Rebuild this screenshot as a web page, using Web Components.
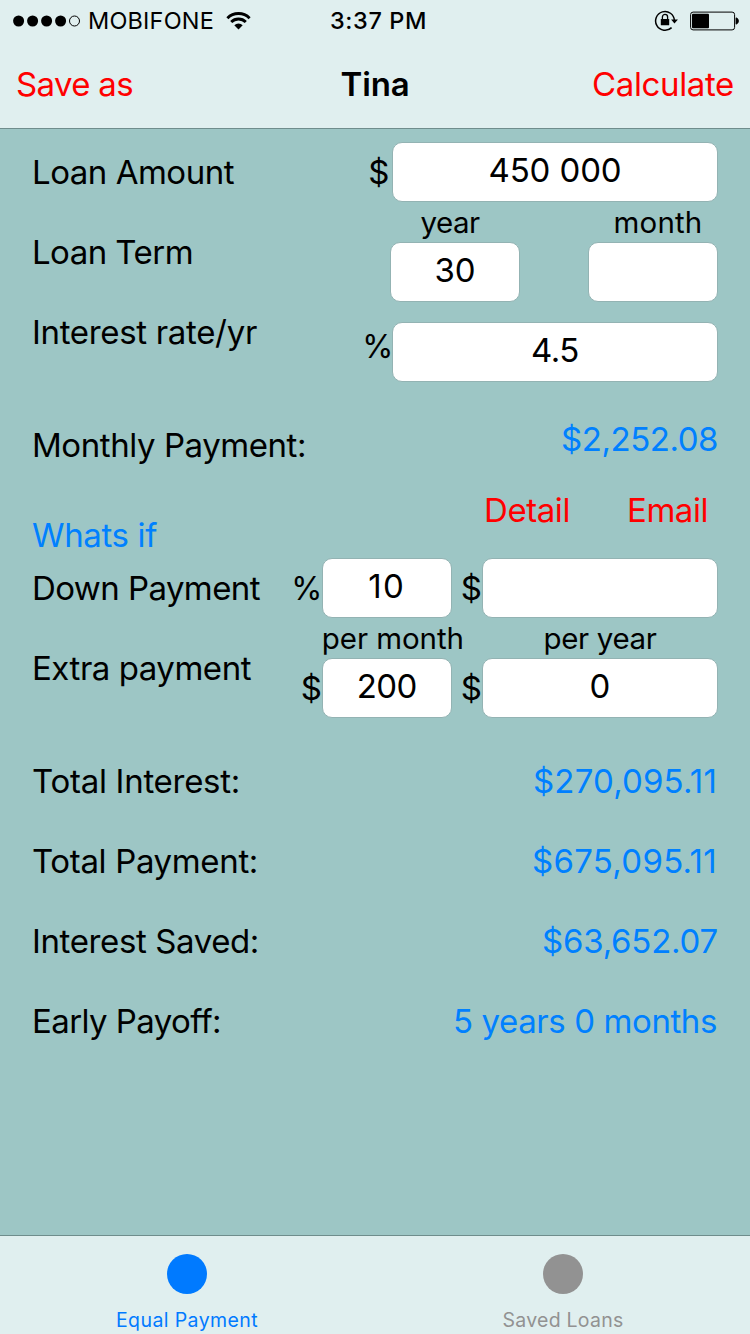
<!DOCTYPE html>
<html lang="en">
<head>
<meta charset="utf-8">
<title>Tina</title>
<style>
  html, body {
    margin: 0;
    height: 100%;
  }
  body {
    font-family: Inter, Roboto, "Liberation Sans", sans-serif;
    font-size: 33px;
    color: #000;
    background: #9dc6c5;
    overflow: hidden;
  }
</style>
</head>
<body>
<loan-app></loan-app>

<script>
// One line of text, tracked so that it takes up "fit" pixels
class UiText extends HTMLElement {
  constructor() {
    super();
    this.attachShadow({ mode: 'open' });
    this.shadowRoot.innerHTML = `
      <style>
        :host { display: block; flex: none; line-height: 40px; white-space: nowrap; }
        :host([tone="blue"]) { color: #0080ff; }
        :host([tone="red"]) { color: #ff0000; }
        :host([size="small"]) { font-size: 29.5px; }
        :host([size="status"]) { font-size: 23.5px; }
        :host([size="tab"]) { font-size: 19.5px; }
        span { display: inline-block; }
      </style>
      <span><slot></slot></span>
    `;
  }

  connectedCallback() {
    const fit = parseFloat(this.getAttribute('fit'));
    if (!fit) return;
    const span = this.shadowRoot.querySelector('span');
    const natural = span.getBoundingClientRect().width;
    span.style.letterSpacing = (fit - natural) / this.textContent.length + 'px';
  }
}

// White rounded input with centered text
class LoanField extends HTMLElement {
  constructor() {
    super();
    this.attachShadow({ mode: 'open' });
    this.shadowRoot.innerHTML = `
      <style>
        :host {
          display: flex;
          flex: none;
          box-sizing: border-box;
          justify-content: center;
          height: 60px;
          padding-top: 7px;
          border: 1px solid #93b3b3;
          border-radius: 10px;
          background: #fff;
        }
      </style>
      <slot></slot>
    `;
  }
}

class LoanRow extends HTMLElement {
  constructor() {
    super();
    this.attachShadow({ mode: 'open' });
    this.shadowRoot.innerHTML = `
      <style>
        :host { display: flex; box-sizing: border-box; flex: none; align-items: flex-start; }
        .controls { display: flex; align-items: flex-start; margin-left: auto; }
      </style>
      <slot name="label"></slot>
      <div class="controls"><slot></slot></div>
    `;
  }
}

class StatusBar extends HTMLElement {
  constructor() {
    super();
    this.attachShadow({ mode: 'open' });
    this.shadowRoot.innerHTML = `
      <style>
        :host { display: grid; grid-template-columns: 1fr auto 1fr; height: 40px; align-items: center; }
        svg { display: block; flex: none; }
        .left, .right { display: flex; align-items: center; height: 40px; }
        .left { padding-left: 13px; }
        .right { justify-content: flex-end; padding-right: 10px; gap: 12px; }
        .time { font-weight: 500; padding: 1px 0 0 7px; }
        .carrier { margin: 1px 12px 0 7px; }
      </style>
      <div class="left">
        <svg width="68" height="12" viewBox="0 0 68 12">
          <circle cx="5.6" cy="6" r="5.5"/>
          <circle cx="19.6" cy="6" r="5.5"/>
          <circle cx="33.6" cy="6" r="5.5"/>
          <circle cx="47.6" cy="6" r="5.5"/>
          <circle cx="61.5" cy="6" r="5" fill="none" stroke="#000"/>
        </svg>
        <ui-text class="carrier" size="status" fit="126">MOBIFONE</ui-text>
        <svg width="25" height="18" viewBox="0 0 25 18">
          <g fill="none" stroke="#000" stroke-width="2.9">
            <path d="M1.4 6.2a15.6 15.6 0 0 1 22.2 0"/>
            <path d="M5.2 10.1a10.3 10.3 0 0 1 14.6 0"/>
          </g>
          <path d="M8.3 13.3a6 6 0 0 1 8.4 0L12.5 17.6z"/>
        </svg>
      </div>
      <ui-text class="time" size="status" fit="97">3:37 PM</ui-text>
      <div class="right">
        <svg width="24" height="22" viewBox="0 0 24 22">
          <path d="M17.6 17.6A9.4 9.4 0 1 1 20.4 10.5" fill="none" stroke="#000" stroke-width="1.5"/>
          <path d="M17.1 9.6h6.8l-3.4 4z"/>
          <rect x="6.8" y="8.9" width="8.4" height="6.4" rx=".6"/>
          <path d="M8.4 9.4V7a2.6 2.6 0 0 1 5.2 0v2.4" fill="none" stroke="#000" stroke-width="1.3"/>
        </svg>
        <svg width="50" height="20" viewBox="0 0 50 20">
          <rect x=".6" y="1.1" width="44" height="17.8" rx="2.5" fill="none" stroke="#000"/>
          <rect x="2" y="2.7" width="17" height="14.6" rx="1"/>
          <path d="M46 6.8a3.3 3.3 0 0 1 0 6.4z" stroke="#000" stroke-width=".8"/>
        </svg>
      </div>
    `;
  }
}

class NavBar extends HTMLElement {
  constructor() {
    super();
    this.attachShadow({ mode: 'open' });
    this.shadowRoot.innerHTML = `
      <style>
        :host {
          display: grid;
          grid-template-columns: 1fr auto 1fr;
          align-items: center;
          height: 88px;
          padding: 0 16px;
          color: #ff0000;
        }
        .title { color: #000; font-weight: 600; }
        .right { display: flex; justify-content: flex-end; }
      </style>
      <slot name="left"></slot>
      <div class="title"><slot></slot></div>
      <div class="right"><slot name="right"></slot></div>
    `;
  }
}

class TabItem extends HTMLElement {
  constructor() {
    super();
    this.attachShadow({ mode: 'open' });
    this.shadowRoot.innerHTML = `
      <style>
        :host { display: flex; flex: 1; flex-direction: column; align-items: center; padding-top: 18px; color: #929292; }
        :host([selected]) { color: #007aff; }
        .dot { flex: none; width: 40px; height: 40px; border-radius: 50%; background: currentColor; margin-bottom: 6px; }
      </style>
      <div class="dot"></div>
      <slot></slot>
    `;
  }
}

class LoanApp extends HTMLElement {
  constructor() {
    super();
    this.attachShadow({ mode: 'open' });
    this.shadowRoot.innerHTML = `
      <style>
        :host { display: flex; flex-direction: column; width: 750px; height: 1334px; overflow: hidden; }
        header { background: #e0efef; border-bottom: 1px solid #6f8d8c; }
        main { flex: 1; display: flex; flex-direction: column; box-sizing: border-box; padding: 13px 32px 0; }
        footer { display: flex; gap: 2px; height: 98px; background: #e0efef; border-top: 1px solid #6f8d8c; overflow: hidden; }
        .column { display: flex; flex-direction: column; align-items: center; }
        .percent { transform: scaleX(.96); transform-origin: right; }
        .result { height: 80px; }
      </style>
      <header>
        <status-bar></status-bar>
        <nav-bar>
          <ui-text slot="left" fit="117">Save as</ui-text>
          <ui-text fit="69">Tina</ui-text>
          <ui-text slot="right" fit="142">Calculate</ui-text>
        </nav-bar>
      </header>
      <main>
        <loan-row style="height: 60px">
          <ui-text slot="label" fit="202" style="margin-top: 10px">Loan Amount</ui-text>
          <ui-text style="margin: 10px 2.5px 0 0">$</ui-text>
          <loan-field style="width: 326px"><ui-text fit="133">450 000</ui-text></loan-field>
        </loan-row>
        <loan-row style="height: 100px">
          <ui-text slot="label" fit="161" style="margin-top: 30px">Loan Term</ui-text>
          <div class="column" style="margin-right: 68px">
            <ui-text size="small" fit="59" style="margin-right: 10px">year</ui-text>
            <loan-field style="width: 130px"><ui-text fit="41">30</ui-text></loan-field>
          </div>
          <div class="column">
            <ui-text size="small" fit="89" style="margin-left: 10px">month</ui-text>
            <loan-field style="width: 130px"></loan-field>
          </div>
        </loan-row>
        <loan-row style="height: 80px">
          <ui-text slot="label" fit="225" style="margin-top: 10px">Interest rate/yr</ui-text>
          <ui-text class="percent" style="margin: 24px -1px 0 0">%</ui-text>
          <loan-field style="width: 326px; margin-top: 20px"><ui-text fit="48">4.5</ui-text></loan-field>
        </loan-row>
        <loan-row style="height: 96px; padding-top: 37px">
          <ui-text slot="label" fit="274" style="margin-top: 6px">Monthly Payment:</ui-text>
          <ui-text tone="blue" fit="157">$2,252.08</ui-text>
        </loan-row>
        <loan-row style="height: 80px; padding-top: 12px">
          <ui-text slot="label" tone="blue" fit="125" style="margin: 25px 0 0">Whats if</ui-text>
          <ui-text tone="red" fit="86" style="margin-right: 57px">Detail</ui-text>
          <ui-text tone="red" fit="81" style="margin-right: 10px">Email</ui-text>
        </loan-row>
        <loan-row style="height: 60px">
          <ui-text slot="label" fit="228" style="margin-top: 10px">Down Payment</ui-text>
          <ui-text class="percent" style="margin: 10px -1px 0 0">%</ui-text>
          <loan-field style="width: 130px"><ui-text fit="37">10</ui-text></loan-field>
          <ui-text style="margin: 10px 0 0 9px">$</ui-text>
          <loan-field style="width: 236px"></loan-field>
        </loan-row>
        <loan-row style="height: 100px">
          <ui-text slot="label" fit="219" style="margin-top: 30px">Extra payment</ui-text>
          <ui-text style="margin: 50px 0 0 0">$</ui-text>
          <div class="column" style="width: 130px">
            <ui-text size="small" fit="142" style="margin-left: 12px">per month</ui-text>
            <loan-field style="width: 130px"><ui-text fit="60">200</ui-text></loan-field>
          </div>
          <ui-text style="margin: 50px 0 0 9px">$</ui-text>
          <div class="column">
            <ui-text size="small" fit="113">per year</ui-text>
            <loan-field style="width: 236px"><ui-text>0</ui-text></loan-field>
          </div>
        </loan-row>
        <loan-row class="result" style="margin-top: 43px">
          <ui-text slot="label" fit="208">Total Interest:</ui-text>
          <ui-text tone="blue" fit="184" style="margin-right: 1px">$270,095.11</ui-text>
        </loan-row>
        <loan-row class="result">
          <ui-text slot="label" fit="226">Total Payment:</ui-text>
          <ui-text tone="blue" fit="185" style="margin-right: 1px">$675,095.11</ui-text>
        </loan-row>
        <loan-row class="result">
          <ui-text slot="label" fit="227">Interest Saved:</ui-text>
          <ui-text tone="blue" fit="176">$63,652.07</ui-text>
        </loan-row>
        <loan-row class="result">
          <ui-text slot="label" fit="189">Early Payoff:</ui-text>
          <ui-text tone="blue" fit="264" style="margin-right: 1px">5 years 0 months</ui-text>
        </loan-row>
      </main>
      <footer>
        <tab-item selected><ui-text size="tab" fit="142">Equal Payment</ui-text></tab-item>
        <tab-item><ui-text size="tab" fit="121">Saved Loans</ui-text></tab-item>
      </footer>
    `;
  }
}

customElements.define('loan-field', LoanField);
customElements.define('loan-row', LoanRow);
customElements.define('status-bar', StatusBar);
customElements.define('nav-bar', NavBar);
customElements.define('tab-item', TabItem);
customElements.define('loan-app', LoanApp);
// last, so that the texts are measured in their final styles
customElements.define('ui-text', UiText);
</script>
</body>
</html>
